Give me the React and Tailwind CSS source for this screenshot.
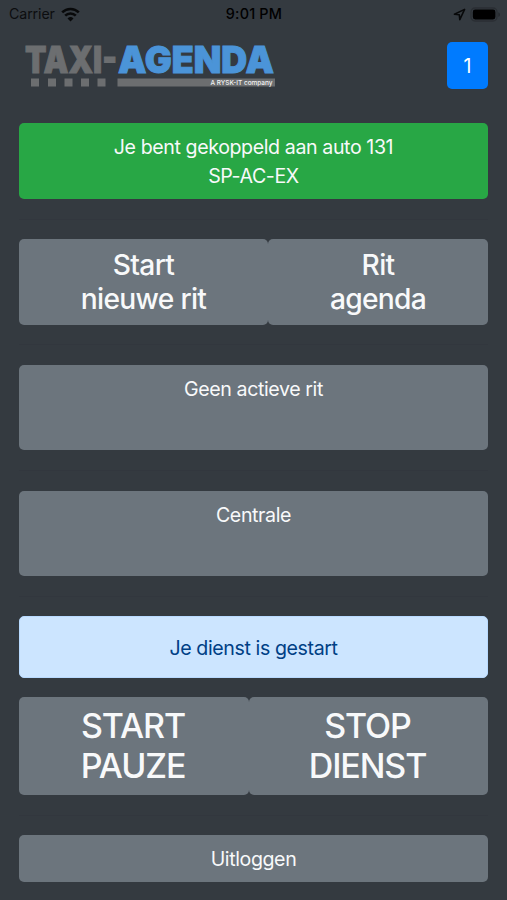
import React from "react";

function StatusBar() {
  return (
    <div className="flex h-7 items-center justify-between pl-[9px] pr-[6px] text-black">
      <div className="flex w-[120px] items-center gap-[6px]">
        <span className="text-[14.2px] leading-none tracking-[-0.1px] text-[#0c0d0f]">Carrier</span>
        <svg width="19" height="15" viewBox="0 0 19 15" fill="none" stroke="#08090a" strokeWidth="2.6">
          <path d="M1.2 5.4a11.8 11.8 0 0 1 16.6 0" />
          <path d="M4.2 8.7a7.5 7.5 0 0 1 10.6 0" />
          <path d="M9.5 14.6 6.5 11.5a4.3 4.3 0 0 1 6 0Z" fill="#08090a" stroke="none" />
        </svg>
      </div>
      <span className="pr-[2px] pt-px text-[14.4px] font-medium leading-none tracking-[0.2px]">9:01 PM</span>
      <div className="flex w-[120px] items-center justify-end gap-[4px]">
        <svg width="13" height="13" viewBox="0 0 13 13" fill="none" stroke="#08090a" strokeWidth="1.6" strokeLinejoin="round">
          <path d="M11.6 1.4 1.4 6.2l4.9.6.5 4.9Z" />
        </svg>
        <svg width="31" height="15" viewBox="0 0 31 15">
          <rect x="1" y="1" width="26" height="13" rx="4" fill="none" stroke="#2a2e33" strokeWidth="1.3" />
          <rect x="2.8" y="2.6" width="22.6" height="9.8" rx="2.4" fill="#000" />
          <path d="M28.4 5.2c2 .8 2 3.8 0 4.6Z" fill="#24282c" />
        </svg>
      </div>
    </div>
  );
}

function Logo() {
  return (
    <svg width="252" height="46" viewBox="0 0 252 46" className="overflow-visible font-['Inter','Liberation_Sans',sans-serif]">
      <g fontSize="37" fontWeight="900" strokeWidth="1">
        <text x="2" y="30.5" textLength="92" lengthAdjust="spacingAndGlyphs" fill="#6c6e70" stroke="#6c6e70">
          TAXI-
        </text>
        <text x="95" y="30.5" textLength="156" lengthAdjust="spacingAndGlyphs" fill="#4b94d8" stroke="#4b94d8">
          AGENDA
        </text>
      </g>
      <g fill="#6c6e70">
        <rect x="8" y="36.5" width="8" height="8" />
        <rect x="25" y="36.5" width="8" height="8" />
        <rect x="41.5" y="36.5" width="8" height="8" />
        <rect x="58" y="36.5" width="8" height="8" />
        <rect x="74.5" y="36.5" width="8" height="8" />
        <rect x="94.5" y="36.5" width="157.5" height="8" />
      </g>
      <text x="187.5" y="42.8" fontSize="6.8" fontWeight="500" textLength="62" lengthAdjust="spacingAndGlyphs" fill="#f1f2f3">
        A RYSK-IT company
      </text>
    </svg>
  );
}

function Divider() {
  return <hr className="my-[19.65px] h-px border-0 bg-[#32373e]" />;
}

export default function App() {
  return (
    <div className="h-[900px] w-full overflow-hidden bg-[#343a40] font-['Inter','Liberation_Sans',sans-serif] text-[19.6px] text-[#f8f9fa]">
      <StatusBar />

      <main className="px-[19px]">
        <header className="flex items-start justify-between pt-[14px]">
          <div className="pl-1">
            <Logo />
          </div>
          <button className="h-[47px] w-[41px] rounded-[5px] bg-[#007bff] pt-[3px] text-white">1</button>
        </header>

        <div className="mt-[34px] flex h-[76px] flex-col justify-center rounded-[5px] bg-[#28a745] pt-[2px] text-center leading-[29.4px] tracking-[-0.4px]">
          <p>Je bent gekoppeld aan auto 131</p>
          <p>SP-AC-EX</p>
        </div>

        <Divider />

        <div className="flex h-[85.4px] text-[28.2px] font-medium leading-[34.5px] tracking-[-0.7px]">
          <button className="w-[249px] rounded-[5px] bg-[#6c757d] pt-px">
            Start
            <br />
            nieuwe rit
          </button>
          <button className="flex-1 rounded-[5px] bg-[#6c757d] pt-px">
            Rit
            <br />
            agenda
          </button>
        </div>

        <Divider />

        <div className="h-[85.4px] rounded-[5px] bg-[#6c757d] pt-[10px] text-center leading-[29.4px] tracking-[-0.4px]">
          Geen actieve rit
        </div>

        <Divider />

        <div className="h-[85.4px] rounded-[5px] bg-[#6c757d] pt-[10px] text-center leading-[29.4px] tracking-[-0.4px]">
          Centrale
        </div>

        <Divider />

        <div className="flex h-[61.6px] items-center justify-center rounded-[5px] border border-[#b8daff] bg-[#cce5ff] pt-[3px] tracking-[-0.4px] text-[#004085]">
          Je dienst is gestart
        </div>

        <div className="mt-[19px] flex h-[98px] text-[34px] font-medium leading-[40px] tracking-[-1.1px]">
          <button className="w-[230px] rounded-[5px] bg-[#6c757d] pr-[2px]">
            START
            <br />
            PAUZE
          </button>
          <button className="flex-1 rounded-[5px] bg-[#6c757d] pr-[2px]">
            STOP
            <br />
            DIENST
          </button>
        </div>

        <Divider />

        <button className="h-[47px] w-full rounded-[5px] bg-[#6c757d] pt-[3px] tracking-[-0.4px]">Uitloggen</button>
      </main>
    </div>
  );
}
